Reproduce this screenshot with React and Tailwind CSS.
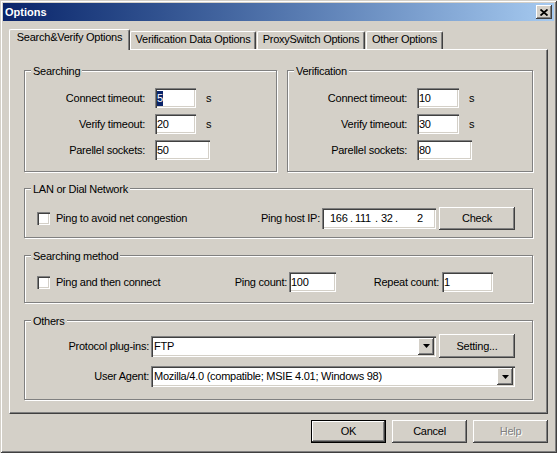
import React from 'react';

const field = "bg-white shadow-[inset_1px_1px_0_#808080,inset_2px_2px_0_#404040,inset_-1px_-1px_0_#fff,inset_-2px_-2px_0_#d4d0c8]";
const raised = "bg-[#d4d0c8] shadow-[inset_-1px_-1px_0_#404040,inset_1px_1px_0_#fff,inset_-2px_-2px_0_#808080]";

function Group({ label, className, children }) {
    return (
        <div className={`relative border border-[#808080] shadow-[1px_1px_0_#fff,inset_1px_1px_0_#fff] ${className}`}>
            <span className="absolute left-[6px] top-[-6px] bg-[#d4d0c8] px-[2px] leading-[13px] whitespace-nowrap">{label}</span>
            {children}
        </div>
    );
}

function Field({ className, children }) {
    return (
        <div className={`${field} h-[20px] flex items-center pl-[2px] leading-[13px] ${className}`}>{children}</div>
    );
}

function Checkbox() {
    return <div className={`${field} w-[13px] h-[13px] shrink-0`} />;
}

function Arrow() {
    return (
        <div className={`${raised} w-[16px] h-[17px] flex items-center justify-center shrink-0`}>
            <svg width="7" height="4" viewBox="0 0 7 4"><path d="M0 0h7L3.5 4z" fill="#000" /></svg>
        </div>
    );
}

function Combo({ className, text }) {
    return (
        <div className={`${field} h-[21px] flex items-center p-[2px] ${className}`}>
            <span className="flex-1 pl-[1px] leading-[13px] whitespace-nowrap overflow-hidden">{text}</span>
            <Arrow />
        </div>
    );
}

function Button({ className, children, disabled }) {
    return (
        <div className={`${raised} h-[23px] flex items-center justify-center leading-[13px] ${disabled ? 'text-[#808080] [text-shadow:1px_1px_0_#fff]' : ''} ${className}`}>
            {children}
        </div>
    );
}

function Row({ label, labelW, value, w, unit, selected }) {
    return (
        <div className="flex items-center h-[20px]">
            <span className={`${labelW} text-right whitespace-nowrap`}>{label}</span>
            <Field className={`ml-[10px] ${w}`}>
                {selected ? <span className="bg-[#0a246a] text-white leading-[15px]">{value}</span> : value}
            </Field>
            {unit && <span className="ml-[10px]">s</span>}
        </div>
    );
}

export default function App() {
    return (
        <div className="w-[557px] h-[453px] bg-[#d4d0c8] p-[3px] flex flex-col text-[11px] tracking-[-0.25px] text-black font-['Liberation_Sans',Arial,sans-serif] shadow-[inset_1px_1px_0_#d4d0c8,inset_-1px_-1px_0_#404040,inset_2px_2px_0_#fff,inset_-2px_-2px_0_#808080]">
            {/* title bar */}
            <div className="h-[18px] bg-linear-to-r from-[#0a246a] to-[#a6caf0] flex items-center justify-between pl-[2px] pr-[2px]">
                <span className="text-white font-bold tracking-normal">Options</span>
                <div className={`${raised} w-[16px] h-[14px] flex items-center justify-center`}>
                    <svg width="8" height="7" viewBox="0 0 8 7">
                        <path d="M0.5 0.5L7.5 6.5M7.5 0.5L0.5 6.5" stroke="#000" strokeWidth="1.8" />
                    </svg>
                </div>
            </div>

            <div className="px-[6px] flex flex-col">
                {/* tabs */}
                <div className="mt-[8px] h-[20px] flex items-end">
                    <div className="relative z-10 w-[121px] h-[21px] mb-[-1px] bg-[#d4d0c8] border-l border-t border-white border-r border-r-[#404040] rounded-t-[2px] shadow-[inset_-1px_0_0_#808080] flex justify-center pt-[1px] leading-[13px] whitespace-nowrap">
                        Search&amp;Verify Options
                    </div>
                    <div className="w-[126px] h-[18px] border-l border-t border-white border-r border-r-[#404040] rounded-t-[2px] shadow-[inset_-1px_0_0_#808080] flex justify-center pt-[1px] leading-[13px] whitespace-nowrap">
                        Verification Data Options
                    </div>
                    <div className="ml-[1px] w-[108px] h-[18px] border-l border-t border-white border-r border-r-[#404040] rounded-t-[2px] shadow-[inset_-1px_0_0_#808080] flex justify-center pt-[1px] leading-[13px] whitespace-nowrap">
                        ProxySwitch Options
                    </div>
                    <div className="ml-[1px] w-[77px] h-[18px] border-l border-t border-white border-r border-r-[#404040] rounded-t-[2px] shadow-[inset_-1px_0_0_#808080] flex justify-center pt-[1px] leading-[13px] whitespace-nowrap">
                        Other Options
                    </div>
                </div>

                {/* tab panel */}
                <div className="w-[539px] h-[365px] border border-t-white border-l-white border-r-[#404040] border-b-[#404040] shadow-[inset_-1px_-1px_0_#808080] pl-[14px] pt-[20px] flex flex-col">
                    <div className="flex gap-[10px]">
                        <Group label="Searching" className="w-[253px] h-[102px]">
                            <div className="pt-[17px] flex flex-col gap-[6px]">
                                <Row label="Connect timeout:" labelW="w-[120px]" value="5" w="w-[41px]" unit selected />
                                <Row label="Verify timeout:" labelW="w-[120px]" value="20" w="w-[41px]" unit />
                                <Row label="Parellel sockets:" labelW="w-[120px]" value="50" w="w-[55px]" />
                            </div>
                        </Group>
                        <Group label="Verification" className="w-[246px] h-[102px]">
                            <div className="pt-[17px] flex flex-col gap-[6px]">
                                <Row label="Connect timeout:" labelW="w-[119px]" value="10" w="w-[42px]" unit />
                                <Row label="Verify timeout:" labelW="w-[119px]" value="30" w="w-[42px]" unit />
                                <Row label="Parellel sockets:" labelW="w-[119px]" value="80" w="w-[55px]" />
                            </div>
                        </Group>
                    </div>

                    <Group label="LAN or Dial Network" className="mt-[16px] w-[509px] h-[50px]">
                        <div className="mt-[18px] h-[23px] flex items-center pl-[12px] pr-[17px]">
                            <Checkbox />
                            <span className="ml-[6px] whitespace-nowrap">Ping to avoid net congestion</span>
                            <span className="ml-auto whitespace-nowrap">Ping host IP:</span>
                            <div className={`${field} ml-[2px] w-[114px] h-[21px] flex items-center pl-[8px] leading-[13px] whitespace-nowrap`}>
                                <span className="w-[20px]">166</span>
                                <span className="w-[5px]">.</span>
                                <span className="w-[20px]">111</span>
                                <span className="w-[6px]">.</span>
                                <span className="w-[14px]">32</span>
                                <span className="w-[22px]">.</span>
                                <span>2</span>
                            </div>
                            <Button className="ml-[3px] w-[76px]">Check</Button>
                        </div>
                    </Group>

                    <Group label="Searching method" className="mt-[17px] w-[509px] h-[48px]">
                        <div className="mt-[16px] h-[20px] flex items-center pl-[12px]">
                            <Checkbox />
                            <span className="ml-[6px] w-[144px] whitespace-nowrap">Ping and then connect</span>
                            <span className="w-[87px] text-right whitespace-nowrap">Ping count:</span>
                            <Field className="ml-[2px] w-[47px]">100</Field>
                            <span className="w-[103px] text-right whitespace-nowrap">Repeat count:</span>
                            <Field className="ml-[3px] w-[51px]">1</Field>
                        </div>
                    </Group>

                    <Group label="Others" className="mt-[17px] w-[509px] h-[80px]">
                        <div className="mt-[13px] h-[24px] flex items-center">
                            <span className="w-[124px] text-right whitespace-nowrap">Protocol plug-ins:</span>
                            <Combo className="ml-[2px] w-[285px]" text="FTP" />
                            <Button className="ml-[3px] w-[76px] h-[24px]">Setting...</Button>
                        </div>
                        <div className="mt-[8px] h-[21px] flex items-center">
                            <span className="w-[124px] text-right whitespace-nowrap">User Agent:</span>
                            <Combo className="ml-[2px] w-[364px]" text="Mozilla/4.0 (compatible; MSIE 4.01; Windows 98)" />
                        </div>
                    </Group>
                </div>

                {/* dialog buttons */}
                <div className="mt-[6px] flex justify-end gap-[6px]">
                    <Button className="w-[75px] border border-black">OK</Button>
                    <Button className="w-[75px]">Cancel</Button>
                    <Button className="w-[75px]" disabled>Help</Button>
                </div>
            </div>
        </div>
    );
}
